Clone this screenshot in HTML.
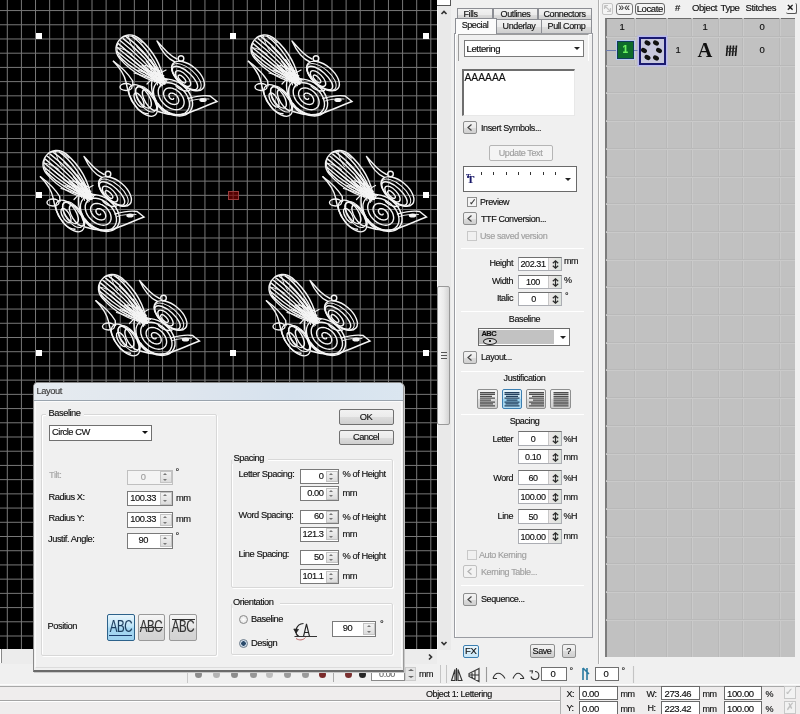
<!DOCTYPE html>
<html><head><meta charset="utf-8">
<style>
*{box-sizing:border-box}
html,body{margin:0;padding:0}
body{will-change:transform;width:800px;height:714px;overflow:hidden;position:relative;background:#f0f0f0;font-family:"Liberation Sans",sans-serif;font-size:9px;letter-spacing:-0.4px;color:#111;-webkit-text-stroke:0.15px currentColor}
.a{position:absolute}
.t{position:absolute;white-space:nowrap;line-height:10px}
.btn{position:absolute;border:1px solid #8e8f8f;border-radius:2px;background:linear-gradient(#f2f2f2,#ebebeb 50%,#dddddd 51%,#cfcfcf);}
.edit{position:absolute;background:#fff;border:1px solid #abadb3;border-top-color:#707070}
.spin{position:absolute;width:13px;right:0;top:0;bottom:0;background:linear-gradient(90deg,#ece8e8,#dde3dd);border-left:1px solid #c8c8c8}
.chev{position:absolute;left:3px;top:2px;width:8px;height:9px;font-size:9px;line-height:9px;color:#444}
.sep{position:absolute;height:1px;background:#a0a0a0;border-bottom:1px solid #fff}
.dis{color:#a0a0a0}
.tab{border:1px solid #8c8e94;border-bottom:none;background:linear-gradient(#f2f2f2,#ebebeb 50%,#dddddd 51%,#cfcfcf)}
</style></head><body>
<svg class="a" style="left:0;top:0" width="437" height="650" viewBox="0 0 437 650">
<defs><g id="bird" fill="none" stroke="#f4f4f4" stroke-width="1.4" stroke-linecap="round">
  <g transform="translate(129.5,48.5) rotate(45) scale(0.95,1)">
    <path d="M52,0 C35,-12 15,-15 0,-14 C-10,-13 -14,-6 -14,0 C-14,6 -10,13 0,14 C15,15 35,12 52,0Z"/>
    <path d="M52,0 C30,-10 8,-13 -7,-10.5"/>
    <path d="M52,0 C30,-7 8,-9 -11,-6"/>
    <path d="M52,0 C30,-4 6,-5 -12,-2.5"/>
    <path d="M52,0 C30,-1 6,-1 -12.5,1"/>
    <path d="M52,0 C30,2 6,3 -12,4.5"/>
    <path d="M52,0 C30,5 8,6 -10,8"/>
    <path d="M52,0 C30,8 8,10 -7,11"/>
    <path d="M52,0 C32,10 14,13 -2,13"/>
    <path d="M-13,-4 C-9,-12 -2,-13 5,-13 M-13,4 C-10,11 -3,13 4,13" stroke-width="1"/>
    <path d="M52,3 C42,4 32,5 24,7 M52,-3 C42,-4 32,-5 24,-7 M52,1 C40,1 30,2 22,3 M52,-1 C40,-1 30,-2 22,-3" stroke-width="1.4"/>
    <path d="M30,-6 L48,6 M34,-6 L50,4 M28,4 L46,-5 M32,6 L50,-3 M38,-5 L52,5 M26,-3 L44,6 M24,1 L40,-6" stroke-width="1.1"/>
  </g>
  <path d="M134,73 C145,76 155,80 165,84 M138,70 C148,74 157,78 166,82 M142,68 C151,72 159,76 168,80 M147,84 C152,78 158,74 166,70" stroke-width="1.2"/>
  <path d="M157,41 C162,52 168,59 175,62 M157,41 C165,50 170,56 177,59"/>
  <circle cx="181" cy="58.5" r="2.8"/>
  <ellipse cx="188" cy="76" rx="19.5" ry="10.5" transform="rotate(40 188 76)"/>
  <ellipse cx="185" cy="78" rx="16" ry="6.5" transform="rotate(42 185 78)"/>
  <ellipse cx="183" cy="78.5" rx="10" ry="4.5" transform="rotate(46 183 78.5)"/>
  <ellipse cx="182" cy="79" rx="5" ry="2" transform="rotate(46 182 79)"/>
  <path d="M189.5,90.5 C184,92 180,90 176,86"/>
  
  
  
  
  
  <path d="M173.6,98.5 L173.6,98.6 L173.5,98.7 L173.5,98.9 L173.4,99.0 L173.3,99.1 L173.2,99.2 L173.0,99.3 L172.9,99.4 L172.7,99.4 L172.5,99.4 L172.2,99.4 L172.0,99.4 L171.7,99.3 L171.5,99.2 L171.2,99.0 L170.9,98.9 L170.6,98.7 L170.4,98.5 L170.1,98.2 L169.9,97.9 L169.6,97.6 L169.4,97.3 L169.3,97.0 L169.1,96.6 L169.0,96.3 L168.9,95.9 L168.9,95.6 L168.9,95.2 L169.0,94.9 L169.1,94.6 L169.2,94.3 L169.4,94.0 L169.7,93.7 L170.0,93.5 L170.3,93.3 L170.6,93.2 L171.0,93.1 L171.5,93.1 L171.9,93.1 L172.4,93.2 L172.9,93.3 L173.5,93.4 L174.0,93.7 L174.5,93.9 L175.0,94.3 L175.6,94.6 L176.1,95.0 L176.5,95.5 L177.0,96.0 L177.4,96.5 L177.7,97.1 L178.0,97.7 L178.3,98.3 L178.5,98.9 L178.6,99.5 L178.7,100.1 L178.7,100.7 L178.7,101.2 L178.5,101.8 L178.3,102.3 L178.0,102.8 L177.7,103.2 L177.3,103.6 L176.8,103.9 L176.3,104.2 L175.7,104.3 L175.0,104.4 L174.3,104.5 L173.6,104.4 L172.8,104.3 L172.1,104.1 L171.3,103.9 L170.5,103.5 L169.7,103.1 L168.9,102.6 L168.1,102.0 L167.4,101.4 L166.7,100.7 L166.1,100.0 L165.5,99.2 L165.0,98.4 L164.5,97.5 L164.2,96.7 L163.9,95.8 L163.7,94.9 L163.6,94.1 L163.6,93.2 L163.7,92.4 L163.9,91.6 L164.2,90.9 L164.6,90.3 L165.1,89.7 L165.6,89.2 L166.3,88.7 L167.1,88.4 L167.9,88.1 L168.8,88.0 L169.7,87.9 L170.7,88.0 L171.7,88.1 L172.8,88.4 L173.8,88.8 L174.9,89.2 L176.0,89.8 L177.0,90.5 L178.0,91.2 L179.0,92.1 L179.9,93.0 L180.8,93.9 L181.5,95.0 L182.2,96.0 L182.8,97.1 L183.3,98.3 L183.7,99.4 L183.9,100.5 L184.1,101.6 L184.1,102.7 L184.0,103.8 L183.7,104.8 L183.4,105.7 L182.9,106.6 L182.3,107.3 L181.5,108.0 L180.7,108.6 L179.8,109.0 L178.7,109.4 L177.6,109.6 L176.4,109.7 L175.2,109.6 L173.9,109.4 L172.6,109.1 L171.2,108.7 L169.9,108.1 L168.5,107.4 L167.2,106.6 L165.9,105.7 L164.7,104.6 L163.6,103.5 L162.5,102.3 L161.5,101.1 L160.6,99.7 L159.9,98.4 L159.3,97.0 L158.8,95.6 L158.4,94.2 L158.3,92.8 L158.2,91.5 L158.3,90.2 L158.6,88.9 L159.0,87.8 L159.6,86.7 L160.3,85.7 L161.2,84.9 L162.2,84.2 L163.3,83.6 L164.5,83.2 L165.9,82.9 L167.3,82.8 L168.8,82.8 L170.3,83.0 L171.9,83.3 L173.6,83.8 L175.2,84.5 L176.8,85.3 L178.4,86.3 L179.9,87.3 L181.4,88.6 L182.8,89.9 L184.1,91.3 L185.3,92.8 L186.4,94.3 L187.3,96.0 L188.1,97.6 L188.7,99.3 L189.1,101.0 L189.4,102.6 L189.5,104.2 L189.4,105.8 L189.1,107.2 L188.7,108.6 L188.0,109.9 L187.2,111.1 L186.2,112.1 L185.1,113.0 L183.8,113.7 L182.3,114.2 L180.8,114.6 L179.1,114.8 L177.4,114.8 L175.6,114.6 L173.7,114.3 L171.8,113.7 L169.9,113.0 L168.0,112.1 L166.2,111.0 L164.3,109.8 L162.6,108.4 L160.9,106.9 L159.4,105.3 L158.0,103.5"/>
  <ellipse cx="173" cy="97.5" rx="22" ry="15.5" transform="rotate(40 173 97.5)"/>
  <path d="M188,98.5 C195,96.5 204,95 210,96 L217,101.5 C205,106 195,111 185,114 C177,115.5 168,115 158,111.5"/>
  <path d="M190,101 C196,99 203,98.5 209,99" stroke-width="0.9"/>
  <ellipse cx="203" cy="100" rx="3" ry="1.4" fill="#f4f4f4"/>
  <path d="M113.4,61.3 C120,66 127,72 132.7,81 L133,86"/>
  <path d="M113.4,61.3 C118,66 124,73 126,82 C128,92 130,100 137.7,108.7 C141,112 145,113.5 148,113.8"/>
  <ellipse cx="126" cy="87" rx="6" ry="3.5"/>
  <ellipse cx="143" cy="100.5" rx="19" ry="9.5" transform="rotate(50 143 100.5)"/>
  <ellipse cx="143.5" cy="97.5" rx="12" ry="5.5" transform="rotate(58 143.5 97.5)"/>
  <ellipse cx="150" cy="100" rx="12" ry="5" transform="rotate(58 150 100)"/>
  <ellipse cx="139" cy="100" rx="8" ry="3.5" transform="rotate(60 139 100)"/>
  <path d="M152,80 C150,92 155,106 166,113"/>

  <g transform="translate(129.5,48.5) rotate(45) scale(0.95,1)" stroke-width="1">
    <path d="M52,0 C34,-5.5 16,-7 4,-6.5"/>
    <path d="M52,0 C34,4.5 16,6 4,6.5"/>
    <path d="M-10,-8 C-5,-5 0,-3 6,-2 M-10,8 C-5,5 0,3 6,2" stroke-width="0.9"/>
  </g>
  
  <ellipse cx="186.5" cy="77" rx="18" ry="8.5" transform="rotate(41 186.5 77)" stroke-width="1"/>
  <ellipse cx="146" cy="99" rx="15" ry="7.5" transform="rotate(55 146 99)" stroke-width="1"/>
</g>
</defs>
<rect x="0" y="0" width="437" height="649.5" fill="#000"/>
<path d="M7.30 0V649.5M21.42 0V649.5M35.53 0V649.5M49.65 0V649.5M63.77 0V649.5M77.89 0V649.5M92.00 0V649.5M106.12 0V649.5M120.24 0V649.5M134.35 0V649.5M148.47 0V649.5M162.59 0V649.5M176.70 0V649.5M190.82 0V649.5M204.94 0V649.5M219.06 0V649.5M233.17 0V649.5M247.29 0V649.5M261.41 0V649.5M275.52 0V649.5M289.64 0V649.5M303.76 0V649.5M317.87 0V649.5M331.99 0V649.5M346.11 0V649.5M360.23 0V649.5M374.34 0V649.5M388.46 0V649.5M402.58 0V649.5M416.69 0V649.5M430.81 0V649.5M0 10.55H437M0 24.77H437M0 38.98H437M0 53.19H437M0 67.41H437M0 81.62H437M0 95.84H437M0 110.05H437M0 124.27H437M0 138.49H437M0 152.70H437M0 166.92H437M0 181.13H437M0 195.34H437M0 209.56H437M0 223.78H437M0 237.99H437M0 252.21H437M0 266.42H437M0 280.63H437M0 294.85H437M0 309.06H437M0 323.28H437M0 337.50H437M0 351.71H437M0 365.93H437M0 380.14H437M0 394.36H437M0 408.57H437M0 422.79H437M0 437.00H437M0 451.22H437M0 465.43H437M0 479.64H437M0 493.86H437M0 508.07H437M0 522.29H437M0 536.50H437M0 550.72H437M0 564.93H437M0 579.15H437M0 593.36H437M0 607.58H437M0 621.79H437M0 636.01H437" stroke="#787878" stroke-width="1" fill="none"/>
<use href="#bird"/>
<use href="#bird" transform="translate(135,0)"/>
<use href="#bird" transform="translate(-73,115.5)"/>
<use href="#bird" transform="translate(209.5,115.5)"/>
<use href="#bird" transform="translate(-17.5,239.5)"/>
<use href="#bird" transform="translate(153,239.5)"/>
<g fill="#fff">
<rect x="36" y="33" width="6" height="6"/><rect x="230" y="33" width="6" height="6"/><rect x="423" y="33" width="6" height="6"/>
<rect x="36" y="192" width="6" height="6"/><rect x="423" y="192" width="6" height="6"/>
<rect x="36" y="350" width="6" height="6"/><rect x="230" y="350" width="6" height="6"/><rect x="423" y="350" width="6" height="6"/>
</g>
<rect x="228.5" y="191.5" width="10" height="8" fill="#800000" fill-opacity="0.65" stroke="#9a3c3c" stroke-width="1"/>
</svg>
<!-- vertical scrollbar -->
<div class="a" style="left:437px;top:0;width:14px;height:650px;background:#e9e9e9;border-left:1px solid #f6f6f6"></div>
<div class="a" style="left:437px;top:0;width:14px;height:6px;background:#fff;border:1px solid #555;border-top:none;border-left:none"></div>
<svg class="a" style="left:439px;top:9px" width="10" height="7"><path d="M2.5 5L5 2.5L7.5 5" fill="none" stroke="#333" stroke-width="1.7"/></svg>
<div class="a" style="left:437px;top:286px;width:13px;height:139px;border:1px solid #999;border-radius:2px;background:linear-gradient(90deg,#f6f6f6,#ececec 50%,#d4d4d4)"></div>
<div class="a" style="left:441px;top:352px;width:6px;height:7px;border-top:1px solid #555;border-bottom:1px solid #555"><div style="margin-top:2px;height:1px;background:#555"></div></div>
<svg class="a" style="left:439px;top:640px" width="10" height="7"><path d="M2.5 2L5 4.5L7.5 2" fill="none" stroke="#333" stroke-width="1.7"/></svg>
<!-- horizontal scrollbar -->
<div class="a" style="left:0;top:649px;width:437px;height:15px;background:#ececec"></div>
<div class="a" style="left:0;top:649px;width:2px;height:14px;background:#fff;border-right:1px solid #888"></div>
<svg class="a" style="left:427px;top:651.5px" width="7" height="10"><path d="M2 2.5L4.5 5L2 7.5" fill="none" stroke="#333" stroke-width="1.7"/></svg>
<!-- docker panel -->
<div class="a" style="left:451px;top:0;width:147px;height:664px;background:#f0f0f0"></div>
<!-- tabs row1 -->
<div class="a tab" style="left:456.5px;top:7.5px;width:36px;height:12px"></div>
<div class="a tab" style="left:493px;top:7.5px;width:45px;height:12px"></div>
<div class="a tab" style="left:537.5px;top:7.5px;width:54.5px;height:12px"></div>
<div class="t" style="left:470.5px;top:8.5px;transform:translateX(-50%)">Fills</div>
<div class="t" style="left:515.5px;top:8.5px;transform:translateX(-50%)">Outlines</div>
<div class="t" style="left:564.5px;top:8.5px;transform:translateX(-50%)">Connectors</div>
<!-- tabs row2 -->
<div class="a tab" style="left:496px;top:19px;width:45.5px;height:14px"></div>
<div class="a tab" style="left:541px;top:19px;width:51px;height:14px"></div>
<div class="t" style="left:519px;top:21px;transform:translateX(-50%)">Underlay</div>
<div class="t" style="left:566.5px;top:21px;transform:translateX(-50%)">Pull Comp</div>
<!-- tab content -->
<div class="a" style="left:454px;top:32.5px;width:139px;height:605px;border:1px solid #9a9ca2;box-shadow:inset 1px 1px 0 #fff;background:#f0f0f0"></div>
<div class="a" style="left:454.5px;top:17.5px;width:42px;height:16px;border:1px solid #8c8e94;border-bottom:none;background:#fbfbfb"></div>
<div class="t" style="left:475px;top:19.5px;transform:translateX(-50%)">Special</div>
<!-- inner group -->
<div class="a" style="left:458px;top:34px;width:131px;height:27px;border-top:1px solid #9c9c9c;border-left:1px solid #9c9c9c;border-right:1px solid #fff"></div>
<div class="edit" style="left:463.5px;top:40px;width:120.5px;height:16.5px;border-color:#7a7a7a"></div>
<div class="t" style="left:466.5px;top:43.5px;font-size:9.6px">Lettering</div>
<div class="a" style="left:573.5px;top:46.5px;border-left:3.5px solid transparent;border-right:3.5px solid transparent;border-top:3.5px solid #222"></div>
<!-- text area -->
<div class="edit" style="left:462px;top:68.5px;width:113px;height:47px;border-color:#e8e8e8;border-top:2px solid #6e6e6e;border-left:2px solid #6e6e6e"></div>
<div class="t" style="left:464.5px;top:72.5px;font-size:10.3px;letter-spacing:0">AAAAAA</div>
<!-- insert symbols -->
<div class="btn sm" style="left:463px;top:121px;width:14px;height:13px"></div><svg class="a" style="left:463px;top:121.0px" width="14" height="13"><path d="M8.5 3.5L5 6.5L8.5 9.5" fill="none" stroke="#444" stroke-width="1.2"/></svg>
<div class="t" style="left:481px;top:122.5px">Insert Symbols...</div>
<div class="btn" style="left:488.5px;top:144.5px;width:64px;height:16px;border-color:#b5b5b5;background:#f4f4f4"></div>
<div class="t dis" style="left:520.5px;top:147.5px;transform:translateX(-50%)">Update Text</div>
<!-- ruler dropdown -->
<div class="edit" style="left:462.5px;top:166px;width:114px;height:26px;border-color:#6a6a6a"></div>
<div class="t" style="left:467px;top:174px;font-family:'Liberation Serif';font-weight:bold;font-size:11px;color:#1a1a6a">T</div>
<div class="t" style="left:466px;top:171px;font-family:'Liberation Serif';font-weight:bold;font-size:7px;color:#1a1a6a">T</div>
<div class="a" style="left:481px;top:172px;width:76px;height:3px;background:repeating-linear-gradient(90deg,#333 0 1px,transparent 1px 12.33px)"></div>
<div class="a" style="left:564.5px;top:177.5px;border-left:3.5px solid transparent;border-right:3.5px solid transparent;border-top:3.5px solid #222"></div>
<!-- preview -->
<div class="a chk" style="left:467px;top:197px;width:10px;height:10px;border:1px solid #8f8f8f;background:#f4f4f4"></div>
<div class="t" style="left:468.5px;top:196.5px;font-size:9px;color:#333">&#10003;</div>
<div class="t" style="left:480px;top:196.5px">Preview</div>
<div class="btn sm" style="left:463px;top:212px;width:14px;height:13px"></div><svg class="a" style="left:463px;top:212.0px" width="14" height="13"><path d="M8.5 3.5L5 6.5L8.5 9.5" fill="none" stroke="#444" stroke-width="1.2"/></svg>
<div class="t" style="left:481px;top:213.5px">TTF Conversion...</div>
<div class="a" style="left:467px;top:231px;width:10px;height:10px;border:1px solid #c8c8c8"></div>
<div class="t dis" style="left:480px;top:231px">Use saved version</div>
<div class="sep" style="left:461px;top:248px;width:123px"></div>
<!-- height width italic -->
<div class="t" style="left:513px;top:257.5px;transform:translateX(-100%)">Height</div>
<div class="edit sp" style="left:517.5px;top:256.5px;width:44px;height:14.5px"><div class="spin"><svg style="position:absolute;left:3px;top:2.5px" width="7" height="9"><path d="M0.8 3.2L3.5 0.8L6.2 3.2M0.8 5.8L3.5 8.2L6.2 5.8M3.5 1V8" fill="none" stroke="#2a2a2a" stroke-width="1.2"/></svg></div></div>
<div class="t" style="left:533px;top:258.5px;transform:translateX(-50%)">202.31</div>
<div class="t" style="left:564px;top:256px">mm</div>
<div class="t" style="left:513px;top:276px;transform:translateX(-100%)">Width</div>
<div class="edit sp" style="left:517.5px;top:274.5px;width:44px;height:14.5px"><div class="spin"><svg style="position:absolute;left:3px;top:2.5px" width="7" height="9"><path d="M0.8 3.2L3.5 0.8L6.2 3.2M0.8 5.8L3.5 8.2L6.2 5.8M3.5 1V8" fill="none" stroke="#2a2a2a" stroke-width="1.2"/></svg></div></div>
<div class="t" style="left:533px;top:276.5px;transform:translateX(-50%)">100</div>
<div class="t" style="left:564px;top:274.5px">%</div>
<div class="t" style="left:513px;top:293px;transform:translateX(-100%)">Italic</div>
<div class="edit sp" style="left:517.5px;top:291.5px;width:44px;height:14.5px"><div class="spin"><svg style="position:absolute;left:3px;top:2.5px" width="7" height="9"><path d="M0.8 3.2L3.5 0.8L6.2 3.2M0.8 5.8L3.5 8.2L6.2 5.8M3.5 1V8" fill="none" stroke="#2a2a2a" stroke-width="1.2"/></svg></div></div>
<div class="t" style="left:533.5px;top:293.5px;transform:translateX(-50%)">0</div>
<div class="t" style="left:565px;top:291px">&deg;</div>
<div class="sep" style="left:461px;top:310.5px;width:123px"></div>
<div class="t" style="left:524.5px;top:313.5px;transform:translateX(-50%)">Baseline</div>
<div class="edit" style="left:477.5px;top:328px;width:92px;height:18px;border-color:#6a6a6a"></div>
<div class="a" style="left:479px;top:329.5px;width:75px;height:14.5px;background:#c2c2c2"></div>
<div class="t" style="left:481.5px;top:328.5px;font-size:7.5px;font-weight:bold;letter-spacing:-0.6px">ABC</div>
<div class="a" style="left:483px;top:337.5px;width:14px;height:7px;border:1.2px solid #222;border-radius:50%;background:#d8d8d8"></div><div class="a" style="left:489px;top:340px;width:2px;height:2px;background:#222"></div>
<div class="a" style="left:559.5px;top:335.5px;border-left:3.5px solid transparent;border-right:3.5px solid transparent;border-top:3.5px solid #222"></div>
<div class="btn sm" style="left:463px;top:350.5px;width:14px;height:13.5px"></div><svg class="a" style="left:463px;top:350.5px" width="14" height="13"><path d="M8.5 3.5L5 6.5L8.5 9.5" fill="none" stroke="#444" stroke-width="1.2"/></svg>
<div class="t" style="left:481px;top:352px">Layout...</div>
<div class="sep" style="left:461px;top:370.5px;width:123px"></div>
<div class="t" style="left:524.5px;top:373px;transform:translateX(-50%)">Justification</div>
<div class="btn jb" style="left:477px;top:388.5px;width:21px;height:20.5px"></div>
<div class="btn jb" style="left:501.5px;top:388.5px;width:20.5px;height:20.5px;border-color:#3c7fb1;background:linear-gradient(#e5f4fc,#c4e5f6 50%,#98d1ef 51%,#b3dcf2)"></div>
<div class="btn jb" style="left:526px;top:388.5px;width:20px;height:20.5px"></div>
<div class="btn jb" style="left:550px;top:388.5px;width:21px;height:20.5px"></div>
<svg class="a" style="left:0;top:0" width="600" height="420"><path d="M480.0 392.50H495.0M480.0 394.40H495.0M480.0 396.30H492.0M480.0 398.20H495.0M480.0 400.10H491.0M480.0 402.00H495.0M480.0 403.90H493.0M480.0 405.80H495.0M529.0 392.50H544.0M529.0 394.40H544.0M532.0 396.30H544.0M529.0 398.20H544.0M533.0 400.10H544.0M529.0 402.00H544.0M531.0 403.90H544.0M529.0 405.80H544.0M553.5 392.50H568.5M553.5 394.40H568.5M553.5 396.30H568.5M553.5 398.20H568.5M553.5 400.10H568.5M553.5 402.00H568.5M553.5 403.90H568.5M553.5 405.80H568.5" stroke="#4e4e4e" stroke-width="1.25" fill="none"/><path d="M504.5 392.50H519.5M504.5 394.40H519.5M506.0 396.30H518.0M504.5 398.20H519.5M506.5 400.10H517.5M504.5 402.00H519.5M505.5 403.90H518.5M504.5 405.80H519.5" stroke="#22405e" stroke-width="1.25" fill="none"/></svg>
<div class="sep" style="left:461px;top:413.5px;width:123px"></div>
<div class="t" style="left:524.5px;top:415.5px;transform:translateX(-50%)">Spacing</div>
<div class="t" style="left:513px;top:433.5px;transform:translateX(-100%)">Letter</div>
<div class="edit sp" style="left:517.5px;top:431px;width:44px;height:15px"><div class="spin"><svg style="position:absolute;left:3px;top:2.5px" width="7" height="9"><path d="M0.8 3.2L3.5 0.8L6.2 3.2M0.8 5.8L3.5 8.2L6.2 5.8M3.5 1V8" fill="none" stroke="#2a2a2a" stroke-width="1.2"/></svg></div></div>
<div class="t" style="left:533px;top:434px;transform:translateX(-50%)">0</div>
<div class="t" style="left:563.5px;top:433.5px">%H</div>
<div class="edit sp" style="left:517.5px;top:449px;width:44px;height:15px"><div class="spin"><svg style="position:absolute;left:3px;top:2.5px" width="7" height="9"><path d="M0.8 3.2L3.5 0.8L6.2 3.2M0.8 5.8L3.5 8.2L6.2 5.8M3.5 1V8" fill="none" stroke="#2a2a2a" stroke-width="1.2"/></svg></div></div>
<div class="t" style="left:533px;top:452px;transform:translateX(-50%)">0.10</div>
<div class="t" style="left:563.5px;top:451.5px">mm</div>
<div class="t" style="left:513px;top:472.5px;transform:translateX(-100%)">Word</div>
<div class="edit sp" style="left:517.5px;top:470px;width:44px;height:15px"><div class="spin"><svg style="position:absolute;left:3px;top:2.5px" width="7" height="9"><path d="M0.8 3.2L3.5 0.8L6.2 3.2M0.8 5.8L3.5 8.2L6.2 5.8M3.5 1V8" fill="none" stroke="#2a2a2a" stroke-width="1.2"/></svg></div></div>
<div class="t" style="left:533px;top:473px;transform:translateX(-50%)">60</div>
<div class="t" style="left:563.5px;top:472.5px">%H</div>
<div class="edit sp" style="left:517.5px;top:489px;width:44px;height:15px"><div class="spin"><svg style="position:absolute;left:3px;top:2.5px" width="7" height="9"><path d="M0.8 3.2L3.5 0.8L6.2 3.2M0.8 5.8L3.5 8.2L6.2 5.8M3.5 1V8" fill="none" stroke="#2a2a2a" stroke-width="1.2"/></svg></div></div>
<div class="t" style="left:533px;top:492px;transform:translateX(-50%)">100.00</div>
<div class="t" style="left:563.5px;top:491.5px">mm</div>
<div class="t" style="left:513px;top:511.0px;transform:translateX(-100%)">Line</div>
<div class="edit sp" style="left:517.5px;top:508.5px;width:44px;height:15px"><div class="spin"><svg style="position:absolute;left:3px;top:2.5px" width="7" height="9"><path d="M0.8 3.2L3.5 0.8L6.2 3.2M0.8 5.8L3.5 8.2L6.2 5.8M3.5 1V8" fill="none" stroke="#2a2a2a" stroke-width="1.2"/></svg></div></div>
<div class="t" style="left:533px;top:511.5px;transform:translateX(-50%)">50</div>
<div class="t" style="left:563.5px;top:511.0px">%H</div>
<div class="edit sp" style="left:517.5px;top:528.5px;width:44px;height:15px"><div class="spin"><svg style="position:absolute;left:3px;top:2.5px" width="7" height="9"><path d="M0.8 3.2L3.5 0.8L6.2 3.2M0.8 5.8L3.5 8.2L6.2 5.8M3.5 1V8" fill="none" stroke="#2a2a2a" stroke-width="1.2"/></svg></div></div>
<div class="t" style="left:533px;top:531.5px;transform:translateX(-50%)">100.00</div>
<div class="t" style="left:563.5px;top:531.0px">mm</div>
<div class="a" style="left:466.5px;top:549.5px;width:10px;height:10px;border:1px solid #c8c8c8"></div>
<div class="t dis" style="left:479px;top:549.5px">Auto Kerning</div>
<div class="btn sm" style="left:463px;top:565px;width:14px;height:13px;border-color:#c0c0c0;background:#f2f2f2"></div><svg class="a" style="left:463px;top:565.0px" width="14" height="13"><path d="M8.5 3.5L5 6.5L8.5 9.5" fill="none" stroke="#b0b0b0" stroke-width="1.2"/></svg>
<div class="t dis" style="left:481px;top:566.5px">Kerning Table...</div>
<div class="sep" style="left:461px;top:584.5px;width:123px"></div>
<div class="btn sm" style="left:463px;top:592.5px;width:14px;height:13px"></div><svg class="a" style="left:463px;top:592.5px" width="14" height="13"><path d="M8.5 3.5L5 6.5L8.5 9.5" fill="none" stroke="#444" stroke-width="1.2"/></svg>
<div class="t" style="left:481px;top:594px">Sequence...</div>
<div class="btn" style="left:463px;top:644.5px;width:15.5px;height:13.5px;border-color:#3c7fb1;background:linear-gradient(#eaf6fd,#c8e6f6)"></div>
<div class="t" style="left:465px;top:646px;font-size:9.5px">FX</div>
<div class="btn" style="left:529.5px;top:644px;width:25.5px;height:14px"></div>
<div class="t" style="left:542px;top:646px;transform:translateX(-50%)">Save</div>
<div class="btn" style="left:561.5px;top:644px;width:14.5px;height:14px"></div>
<div class="t" style="left:568.5px;top:646px;transform:translateX(-50%)">?</div>
<div class="a" style="left:598px;top:0;width:1px;height:664px;background:#b0b0b0"></div>
<!-- object list -->
<div class="a" style="left:599px;top:0;width:201px;height:664px;background:#f0f0f0;border-left:1px solid #fafafa"></div>
<div class="btn" style="left:602px;top:2.5px;width:11px;height:12px;border-color:#c4c4c4;background:#f4f4f4"></div>
<svg class="a" style="left:603px;top:4px" width="9" height="9"><path d="M1.5 1.5H5M1.5 1.5V5M2 2L7.5 7.5M7.5 4V7.5H4" fill="none" stroke="#c4c4c4" stroke-width="1.2"/></svg>
<div class="btn" style="left:615.5px;top:2.5px;width:17.5px;height:12px;background:#f5f5f5;border-color:#777;border-radius:3px"></div>
<div class="t" style="left:624.3px;top:3px;font-size:10px;letter-spacing:0.3px;transform:translateX(-50%);color:#333">&raquo;&laquo;</div>
<div class="btn" style="left:634.5px;top:2.5px;width:30.5px;height:12px;background:#f5f5f5;border-color:#666;border-radius:3px"></div>
<div class="t" style="left:649.8px;top:3.5px;transform:translateX(-50%);font-size:9.5px">Locate</div>
<div class="t" style="left:675px;top:3px;font-size:9.5px">#</div>
<div class="t" style="left:692px;top:3px;font-size:9.5px">Object</div>
<div class="t" style="left:720.5px;top:3px;font-size:9.5px">Type</div>
<div class="t" style="left:745.5px;top:3px;font-size:9.5px">Stitches</div>
<div class="btn" style="left:786px;top:3px;width:11px;height:11px;border:none;border-right:1px solid #555;border-bottom:1px solid #555;background:#f4f4f4"></div>
<div class="t" style="left:787px;top:2px;font-size:11px;font-weight:bold">&times;</div>
<div class="a" style="left:605px;top:18px;width:190px;height:639px;background:#c1c1c1;border-left:2px solid #7c7c7c;border-top:1px solid #6c6c6c;overflow:hidden"></div>
<div class="a" style="left:634.1px;top:18px;width:2px;height:639px;border-left:1px solid #b9b9b9;border-right:1px solid #cacaca"></div>
<div class="a" style="left:665.5px;top:18px;width:2px;height:639px;border-left:1px solid #b9b9b9;border-right:1px solid #cacaca"></div>
<div class="a" style="left:690.5px;top:18px;width:2px;height:639px;border-left:1px solid #b9b9b9;border-right:1px solid #cacaca"></div>
<div class="a" style="left:718.1px;top:18px;width:2px;height:639px;border-left:1px solid #b9b9b9;border-right:1px solid #cacaca"></div>
<div class="a" style="left:741.5px;top:18px;width:2px;height:639px;border-left:1px solid #b9b9b9;border-right:1px solid #cacaca"></div>
<div class="a" style="left:778.5px;top:18px;width:2px;height:639px;border-left:1px solid #b9b9b9;border-right:1px solid #cacaca"></div>
<div class="a" style="left:606px;top:36.0px;width:189px;height:2px;border-top:1px solid #b9b9b9;border-bottom:1px solid #cacaca"></div>
<div class="a" style="left:606px;top:64.7px;width:189px;height:2px;border-top:1px solid #b9b9b9;border-bottom:1px solid #cacaca"></div>
<div class="a" style="left:606px;top:92.4px;width:189px;height:2px;border-top:1px solid #b9b9b9;border-bottom:1px solid #cacaca"></div>
<div class="a" style="left:606px;top:120.1px;width:189px;height:2px;border-top:1px solid #b9b9b9;border-bottom:1px solid #cacaca"></div>
<div class="a" style="left:606px;top:147.8px;width:189px;height:2px;border-top:1px solid #b9b9b9;border-bottom:1px solid #cacaca"></div>
<div class="a" style="left:606px;top:175.5px;width:189px;height:2px;border-top:1px solid #b9b9b9;border-bottom:1px solid #cacaca"></div>
<div class="a" style="left:606px;top:203.2px;width:189px;height:2px;border-top:1px solid #b9b9b9;border-bottom:1px solid #cacaca"></div>
<div class="a" style="left:606px;top:230.9px;width:189px;height:2px;border-top:1px solid #b9b9b9;border-bottom:1px solid #cacaca"></div>
<div class="a" style="left:606px;top:258.6px;width:189px;height:2px;border-top:1px solid #b9b9b9;border-bottom:1px solid #cacaca"></div>
<div class="a" style="left:606px;top:286.3px;width:189px;height:2px;border-top:1px solid #b9b9b9;border-bottom:1px solid #cacaca"></div>
<div class="a" style="left:606px;top:314.0px;width:189px;height:2px;border-top:1px solid #b9b9b9;border-bottom:1px solid #cacaca"></div>
<div class="a" style="left:606px;top:341.7px;width:189px;height:2px;border-top:1px solid #b9b9b9;border-bottom:1px solid #cacaca"></div>
<div class="a" style="left:606px;top:369.4px;width:189px;height:2px;border-top:1px solid #b9b9b9;border-bottom:1px solid #cacaca"></div>
<div class="a" style="left:606px;top:397.1px;width:189px;height:2px;border-top:1px solid #b9b9b9;border-bottom:1px solid #cacaca"></div>
<div class="a" style="left:606px;top:424.8px;width:189px;height:2px;border-top:1px solid #b9b9b9;border-bottom:1px solid #cacaca"></div>
<div class="a" style="left:606px;top:452.5px;width:189px;height:2px;border-top:1px solid #b9b9b9;border-bottom:1px solid #cacaca"></div>
<div class="a" style="left:606px;top:480.2px;width:189px;height:2px;border-top:1px solid #b9b9b9;border-bottom:1px solid #cacaca"></div>
<div class="a" style="left:606px;top:507.9px;width:189px;height:2px;border-top:1px solid #b9b9b9;border-bottom:1px solid #cacaca"></div>
<div class="a" style="left:606px;top:535.6px;width:189px;height:2px;border-top:1px solid #b9b9b9;border-bottom:1px solid #cacaca"></div>
<div class="a" style="left:606px;top:563.3px;width:189px;height:2px;border-top:1px solid #b9b9b9;border-bottom:1px solid #cacaca"></div>
<div class="a" style="left:606px;top:591.0px;width:189px;height:2px;border-top:1px solid #b9b9b9;border-bottom:1px solid #cacaca"></div>
<div class="a" style="left:606px;top:618.7px;width:189px;height:2px;border-top:1px solid #b9b9b9;border-bottom:1px solid #cacaca"></div>
<div class="t" style="left:619.5px;top:22px;font-size:9.5px">1</div>
<div class="t" style="left:702.5px;top:22px;font-size:9.5px">1</div>
<div class="t" style="left:759.5px;top:22px;font-size:9.5px">0</div>
<div class="a" style="left:606px;top:49.5px;width:12px;height:1px;background:#6c7cb0"></div>
<div class="a" style="left:617px;top:41px;width:17px;height:17.5px;background:#0e6b2a;border:1.5px solid #123a5a;box-shadow:0 0 0 1px #b8c8f0"></div>
<div class="t" style="left:622.5px;top:44.5px;font-size:10px;font-weight:bold;color:#6cf060">1</div>
<div class="a" style="left:634px;top:49.5px;width:5px;height:1px;background:#6c7cb0"></div>
<div class="a" style="left:638.5px;top:37px;width:27.5px;height:27.5px;background:#c8c8de;border:2px solid #1a1a70;box-shadow:0 0 0 1.5px #b8b8f0"></div>
<svg class="a" style="left:640px;top:39px" width="25" height="24" viewBox="0 0 25 24"><g fill="#111">
<ellipse cx="7.5" cy="4" rx="3.2" ry="2.2" transform="rotate(30 7.5 4)"/><ellipse cx="16" cy="4" rx="3.2" ry="2.2" transform="rotate(30 16 4)"/>
<ellipse cx="4" cy="11.5" rx="3.2" ry="2.2" transform="rotate(30 4 11.5)"/><ellipse cx="19" cy="11.5" rx="3.2" ry="2.2" transform="rotate(30 19 11.5)"/>
<ellipse cx="7.5" cy="18.5" rx="3.2" ry="2.2" transform="rotate(30 7.5 18.5)"/><ellipse cx="16" cy="19" rx="3.2" ry="2.2" transform="rotate(30 16 19)"/></g></svg>
<div class="t" style="left:675.5px;top:45px;font-size:9.5px">1</div>
<div class="t" style="left:697.5px;top:40px;font-family:'Liberation Serif';font-weight:bold;font-size:20.5px;line-height:20px;letter-spacing:0;-webkit-text-stroke:0">A</div>
<svg class="a" style="left:725px;top:44px" width="14" height="13" viewBox="0 0 14 13"><path d="M2.5 1.5L1.5 12M5.5 1.5L4.5 12M8.5 1.5L7.5 12M11.5 1.5L10.5 12" stroke="#151515" stroke-width="1.6" fill="none"/><path d="M1 5L3 3.5L4 5L6 3.5L7 5L9 3.5L10 5L12 3.5M1 8.5L3 7L4 8.5L6 7L7 8.5L9 7L10 8.5L12 7" stroke="#333" stroke-width="0.9" fill="none"/></svg>
<div class="t" style="left:759.5px;top:45px;font-size:9.5px">0</div>
<!-- toolbar row -->
<div class="a" style="left:0;top:664px;width:800px;height:20px;background:#f0f0f0"></div>
<div class="a" style="left:0;top:683.5px;width:800px;height:1px;background:#fcfcfc"></div>
<div class="a" style="left:0;top:685.5px;width:800px;height:1px;background:#a8a8a8"></div>
<div class="a" style="left:187px;top:665px;width:1px;height:18px;background:#c8c8c8"></div>
<div class="a" style="left:195.1px;top:671px;width:7px;height:7px;border-radius:50%;background:#8c8c8c"></div>
<div class="a" style="left:213.3px;top:671px;width:7px;height:7px;border-radius:50%;background:#b4b4b4"></div>
<div class="a" style="left:230.5px;top:671px;width:7px;height:7px;border-radius:50%;background:#8c8c8c"></div>
<div class="a" style="left:249.5px;top:671px;width:7px;height:7px;border-radius:50%;background:#969696"></div>
<div class="a" style="left:265.5px;top:671px;width:7px;height:7px;border-radius:50%;background:#bdbdbd"></div>
<div class="a" style="left:284.0px;top:671px;width:7px;height:7px;border-radius:50%;background:#9a9a9a"></div>
<div class="a" style="left:301.5px;top:671px;width:7px;height:7px;border-radius:50%;background:#9a9a9a"></div>
<div class="a" style="left:318.5px;top:671px;width:7px;height:7px;border-radius:50%;background:#7a2a2a"></div>
<div class="a" style="left:344.5px;top:671px;width:7px;height:7px;border-radius:50%;background:#7a3030"></div>
<div class="a" style="left:358.5px;top:671px;width:7px;height:7px;border-radius:50%;background:#262626"></div>
<div class="a" style="left:332.5px;top:667px;width:1px;height:15px;background:#aaa"></div>
<div class="a" style="left:344px;top:669px;width:6px;height:2px;background:#223"></div>
<div class="edit" style="left:370.5px;top:667px;width:34px;height:14px;border-color:#8a8a8a"></div>
<div class="t" style="left:387px;top:668.5px;transform:translateX(-50%);color:#666">0.00</div>
<div class="a" style="left:405px;top:667px;width:11px;height:14px;background:#e4e4e4;border:1px solid #ccc"></div>
<div class="a" style="left:408px;top:669px;border-left:3px solid transparent;border-right:3px solid transparent;border-bottom:2.5px solid #666"></div>
<div class="a" style="left:408px;top:676px;border-left:3px solid transparent;border-right:3px solid transparent;border-top:2.5px solid #666"></div>
<div class="t" style="left:419px;top:669px">mm</div>
<div class="a" style="left:440px;top:665px;width:1px;height:18px;background:#c4c4c4"></div>
<div class="a" style="left:446px;top:665px;width:1px;height:18px;background:#c4c4c4"></div>
<svg class="a" style="left:450px;top:666px" width="190" height="17" viewBox="450 666 190 17" fill="none" stroke="#333" stroke-width="1.1">
<path d="M456.5 668V681M455 669.5L451.5 680.5H455ZM458 669.5L462 680.5H458Z"/>
<path d="M479 668.5L469 673.5V676.5L479 681.5ZM469 675H479M472 671.5V679M475 670.5V680"/>
<path d="M486.5 667V682" stroke="#999"/>
<path d="M493 678.5C495 671.5 501 671.5 505 678.5M493 678.5H497" />
<path d="M513 678.5C516 671.5 520 671.5 524 678.5M520 678.5H524"/>
<path d="M535 671.5A4 4 0 1 1 531 676.5M529.5 671L532.5 670.8L532 673.5"/>
<path d="M583 668V680M587 668V680M583 668L589 674" stroke="#2a7aa0" stroke-width="1.6"/>
<path d="M633.5 665V683" stroke="#c4c4c4"/>
</svg>
<div class="edit" style="left:540.5px;top:667px;width:26px;height:14px;border-color:#707070"></div>
<div class="t" style="left:553px;top:668.5px;transform:translateX(-50%);font-size:9.5px">0</div>
<div class="t" style="left:569.5px;top:666px">&deg;</div>
<div class="edit" style="left:594.5px;top:667px;width:24px;height:14px;border-color:#707070"></div>
<div class="t" style="left:606px;top:668.5px;transform:translateX(-50%);font-size:9.5px">0</div>
<div class="t" style="left:621.5px;top:666px">&deg;</div>
<!-- status bar -->
<div class="a" style="left:0;top:686.5px;width:800px;height:28px;background:#efeded"></div>
<div class="a" style="left:0;top:700px;width:560px;height:1px;background:#a4a4a4"></div>
<div class="a" style="left:0;top:701px;width:560px;height:1px;background:#fff"></div>
<div class="a" style="left:560px;top:686.5px;width:1px;height:28px;background:#b0b0b0"></div>
<div class="t" style="left:426px;top:689px">Object 1: Lettering</div>
<div class="t" style="left:566.5px;top:688.5px">X:</div>
<div class="t" style="left:566.5px;top:703px">Y:</div>
<div class="edit" style="left:578.5px;top:686px;width:39.5px;height:13.5px;border-color:#6a6a6a"></div>
<div class="edit" style="left:578.5px;top:701px;width:39.5px;height:13.5px;border-color:#6a6a6a"></div>
<div class="t" style="left:582px;top:688.5px;font-size:9.5px">0.00</div>
<div class="t" style="left:582px;top:703.5px;font-size:9.5px">0.00</div>
<div class="t" style="left:620.5px;top:689px">mm</div>
<div class="t" style="left:620.5px;top:704px">mm</div>
<div class="t" style="left:646.5px;top:688.5px">W:</div>
<div class="t" style="left:647.5px;top:703px">H:</div>
<div class="edit" style="left:660.5px;top:686px;width:39.5px;height:13.5px;border-color:#6a6a6a"></div>
<div class="edit" style="left:660.5px;top:701px;width:39.5px;height:13.5px;border-color:#6a6a6a"></div>
<div class="t" style="left:664.5px;top:688.5px;font-size:9.5px">273.46</div>
<div class="t" style="left:664.5px;top:703.5px;font-size:9.5px">223.42</div>
<div class="t" style="left:702.5px;top:689px">mm</div>
<div class="t" style="left:702.5px;top:704px">mm</div>
<div class="edit" style="left:723.5px;top:686px;width:38.5px;height:13.5px;border-color:#6a6a6a"></div>
<div class="edit" style="left:723.5px;top:701px;width:38.5px;height:13.5px;border-color:#6a6a6a"></div>
<div class="t" style="left:727px;top:688.5px;font-size:9.5px">100.00</div>
<div class="t" style="left:727px;top:703.5px;font-size:9.5px">100.00</div>
<div class="t" style="left:765.5px;top:688.5px">%</div>
<div class="t" style="left:765.5px;top:703.5px">%</div>
<div class="a" style="left:783.5px;top:686px;width:12px;height:13px;border:1px solid #c8c8c8;background:#f2f2f2"></div>
<div class="a" style="left:783.5px;top:701px;width:12px;height:13px;border:1px solid #c8c8c8;background:#f2f2f2"></div>
<div class="t" style="left:785px;top:687px;color:#c0c0c0;font-size:10px">&#10003;</div>
<div class="t" style="left:785.5px;top:702px;color:#c0c0c0;font-size:10px">&#10007;</div>
<!-- dialog -->
<div class="a" style="left:33px;top:381.5px;width:371px;height:290px;background:#f0f0f0;border:1px solid #8a8a8a;border-bottom:2px solid #6a6a6a;border-right:1.5px solid #9a9a9a;border-radius:5px 5px 0 0;box-shadow:1px 1px 0 #c8c8c8"></div>
<div class="a" style="left:34px;top:382.5px;width:369px;height:18px;background:linear-gradient(90deg,#e6ebf0,#dfe6ee 40%,#d6e2ee 70%,#dbe6f0);border-bottom:1px solid #9aa4ae;border-radius:4px 4px 0 0"></div>
<div class="t" style="left:36.5px;top:386px;font-size:9.3px;color:#3c3c3c">Layout</div>
<div class="a" style="left:35px;top:401px;width:367px;height:267px;background:#f0f0f0;border:1px solid #fbfbfb;border-bottom-color:#dcdcdc"></div>
<!-- group boxes -->
<div class="a" style="left:41px;top:413.5px;width:175.5px;height:242px;border:1px solid #d8d8d8;box-shadow:inset 1px 1px 0 #fff, 1px 1px 0 #fff;border-radius:2px"></div>
<div class="a" style="left:231px;top:458.5px;width:161.5px;height:129.5px;border:1px solid #d8d8d8;box-shadow:inset 1px 1px 0 #fff, 1px 1px 0 #fff;border-radius:2px"></div>
<div class="a" style="left:231px;top:602.5px;width:161.5px;height:52px;border:1px solid #d8d8d8;box-shadow:inset 1px 1px 0 #fff, 1px 1px 0 #fff;border-radius:2px"></div>
<div class="a" style="left:46px;top:408px;width:38px;height:11px;background:#f0f0f0"></div>
<div class="a" style="left:232px;top:453px;width:36px;height:11px;background:#f0f0f0"></div>
<div class="a" style="left:232px;top:597px;width:48px;height:11px;background:#f0f0f0"></div>
<div class="t" style="left:48.5px;top:408.0px;font-size:9.3px;letter-spacing:-0.45px;">Baseline</div>
<div class="edit" style="left:48.5px;top:424.5px;width:103.5px;height:16.5px;border-color:#707070"></div>
<div class="t" style="left:52px;top:427.0px;font-size:9.3px;letter-spacing:-0.45px;">Circle CW</div>
<div class="a" style="left:141.5px;top:431px;border-left:3.5px solid transparent;border-right:3.5px solid transparent;border-top:3.5px solid #111"></div>
<div class="t" style="left:49px;top:470.0px;font-size:9.3px;letter-spacing:-0.45px;color:#a8a8a8">Tilt:</div>
<div class="edit" style="left:127px;top:469.5px;width:45.5px;height:15.0px;border-color:#c0c0c0;background:#f4f4f4;"></div>
<div class="a" style="left:159.5px;top:471.0px;width:12px;height:12.0px;background:linear-gradient(#f2f2f2,#dcdcdc);border:1px solid #c4c4c4"></div>
<div class="a" style="left:163.0px;top:473.0px;border-left:2.5px solid transparent;border-right:2.5px solid transparent;border-bottom:2.5px solid #777"></div>
<div class="a" style="left:163.0px;top:478.5px;border-left:2.5px solid transparent;border-right:2.5px solid transparent;border-top:2.5px solid #777"></div>
<div class="t" style="left:143.2px;top:471.5px;transform:translateX(-50%);font-size:9.3px;letter-spacing:-0.45px;color:#a0a0a0">0</div>
<div class="t" style="left:175.5px;top:466.5px;font-size:9.3px;letter-spacing:-0.45px;">&deg;</div>
<div class="t" style="left:48.5px;top:491.5px;font-size:9.3px;letter-spacing:-0.45px;">Radius X:</div>
<div class="edit" style="left:127px;top:490.5px;width:45.5px;height:15.5px;border-color:#7a7a7a;"></div>
<div class="a" style="left:159.5px;top:492.0px;width:12px;height:12.5px;background:linear-gradient(#f2f2f2,#dcdcdc);border:1px solid #c4c4c4"></div>
<div class="a" style="left:163.0px;top:494.0px;border-left:2.5px solid transparent;border-right:2.5px solid transparent;border-bottom:2.5px solid #777"></div>
<div class="a" style="left:163.0px;top:500.0px;border-left:2.5px solid transparent;border-right:2.5px solid transparent;border-top:2.5px solid #777"></div>
<div class="t" style="left:143.2px;top:492.8px;transform:translateX(-50%);font-size:9.3px;letter-spacing:-0.45px;color:#111">100.33</div>
<div class="t" style="left:176px;top:492.5px;font-size:9.3px;letter-spacing:-0.45px;">mm</div>
<div class="t" style="left:48.5px;top:513.0px;font-size:9.3px;letter-spacing:-0.45px;">Radius Y:</div>
<div class="edit" style="left:127px;top:512px;width:45.5px;height:15.5px;border-color:#7a7a7a;"></div>
<div class="a" style="left:159.5px;top:513.5px;width:12px;height:12.5px;background:linear-gradient(#f2f2f2,#dcdcdc);border:1px solid #c4c4c4"></div>
<div class="a" style="left:163.0px;top:515.5px;border-left:2.5px solid transparent;border-right:2.5px solid transparent;border-bottom:2.5px solid #777"></div>
<div class="a" style="left:163.0px;top:521.5px;border-left:2.5px solid transparent;border-right:2.5px solid transparent;border-top:2.5px solid #777"></div>
<div class="t" style="left:143.2px;top:514.2px;transform:translateX(-50%);font-size:9.3px;letter-spacing:-0.45px;color:#111">100.33</div>
<div class="t" style="left:176px;top:514.0px;font-size:9.3px;letter-spacing:-0.45px;">mm</div>
<div class="t" style="left:48px;top:534.0px;font-size:9.3px;letter-spacing:-0.45px;">Justif. Angle:</div>
<div class="edit" style="left:127px;top:533px;width:45.5px;height:15.5px;border-color:#7a7a7a;"></div>
<div class="a" style="left:159.5px;top:534.5px;width:12px;height:12.5px;background:linear-gradient(#f2f2f2,#dcdcdc);border:1px solid #c4c4c4"></div>
<div class="a" style="left:163.0px;top:536.5px;border-left:2.5px solid transparent;border-right:2.5px solid transparent;border-bottom:2.5px solid #777"></div>
<div class="a" style="left:163.0px;top:542.5px;border-left:2.5px solid transparent;border-right:2.5px solid transparent;border-top:2.5px solid #777"></div>
<div class="t" style="left:143.2px;top:535.2px;transform:translateX(-50%);font-size:9.3px;letter-spacing:-0.45px;color:#111">90</div>
<div class="t" style="left:175.5px;top:530.5px;font-size:9.3px;letter-spacing:-0.45px;">&deg;</div>
<div class="t" style="left:47.5px;top:620.5px;font-size:9.3px;letter-spacing:-0.45px;">Position</div>
<div class="btn" style="left:106.5px;top:613.5px;width:28px;height:27.5px;border-color:#2c628b;border-width:1.5px;background:linear-gradient(#e8f5fc,#bfe4f7 45%,#a5d7f2 55%,#9fd2ef)"></div>
<div class="btn" style="left:137.5px;top:613.5px;width:27.5px;height:27.5px;border-color:#9a9a9a;background:linear-gradient(#f6f6f6,#e6e6e6 50%,#d8d8d8 51%,#d2d2d2)"></div>
<div class="btn" style="left:169px;top:613.5px;width:28px;height:27.5px;border-color:#9a9a9a;background:linear-gradient(#f6f6f6,#e6e6e6 50%,#d8d8d8 51%,#d2d2d2)"></div>
<div class="t" style="left:120.5px;top:618.5px;font-size:16px;line-height:16px;transform:translateX(-50%) scaleX(0.72);color:#1c3c5c;letter-spacing:-0.5px">ABC</div>
<div class="t" style="left:151.3px;top:618.5px;font-size:16px;line-height:16px;transform:translateX(-50%) scaleX(0.72);color:#333;letter-spacing:-0.5px">ABC</div>
<div class="t" style="left:183px;top:618.5px;font-size:16px;line-height:16px;transform:translateX(-50%) scaleX(0.72);color:#333;letter-spacing:-0.5px">ABC</div>
<div class="a" style="left:109px;top:634.5px;width:23px;height:1.5px;background:#1c3c6c"></div>
<div class="a" style="left:140px;top:627px;width:23px;height:1px;background:#333"></div>
<div class="a" style="left:172px;top:618.5px;width:23px;height:1px;background:#333"></div>
<!-- OK / Cancel -->
<div class="btn" style="left:338.5px;top:409px;width:55.5px;height:15.5px;border-color:#707070"></div>
<div class="btn" style="left:338.5px;top:429.5px;width:55.5px;height:15.5px;border-color:#707070"></div>
<div class="t" style="left:366px;top:411.5px;transform:translateX(-50%);font-size:9.3px;letter-spacing:-0.45px">OK</div>
<div class="t" style="left:366px;top:432px;transform:translateX(-50%);font-size:9.3px;letter-spacing:-0.45px">Cancel</div>
<div class="t" style="left:233.5px;top:453.0px;font-size:9.3px;letter-spacing:-0.45px;">Spacing</div>
<div class="t" style="left:238.5px;top:468.5px;font-size:9.3px;letter-spacing:-0.45px;">Letter Spacing:</div>
<div class="edit" style="left:300px;top:469px;width:38.5px;height:14.5px;border-color:#7a7a7a;"></div>
<div class="a" style="left:325.5px;top:470.5px;width:12px;height:11.5px;background:linear-gradient(#f2f2f2,#dcdcdc);border:1px solid #c4c4c4"></div>
<div class="a" style="left:329.0px;top:472.5px;border-left:2.5px solid transparent;border-right:2.5px solid transparent;border-bottom:2.5px solid #777"></div>
<div class="a" style="left:329.0px;top:477.5px;border-left:2.5px solid transparent;border-right:2.5px solid transparent;border-top:2.5px solid #777"></div>
<div class="t" style="left:323.5px;top:470.8px;transform:translateX(-100%);font-size:9.3px;letter-spacing:-0.45px;color:#111">0</div>
<div class="t" style="left:342.5px;top:469.0px;font-size:9.3px;letter-spacing:-0.45px;">% of Height</div>
<div class="edit" style="left:300px;top:486px;width:38.5px;height:15.0px;border-color:#7a7a7a;"></div>
<div class="a" style="left:325.5px;top:487.5px;width:12px;height:12.0px;background:linear-gradient(#f2f2f2,#dcdcdc);border:1px solid #c4c4c4"></div>
<div class="a" style="left:329.0px;top:489.5px;border-left:2.5px solid transparent;border-right:2.5px solid transparent;border-bottom:2.5px solid #777"></div>
<div class="a" style="left:329.0px;top:495.0px;border-left:2.5px solid transparent;border-right:2.5px solid transparent;border-top:2.5px solid #777"></div>
<div class="t" style="left:323.5px;top:488.0px;transform:translateX(-100%);font-size:9.3px;letter-spacing:-0.45px;color:#111">0.00</div>
<div class="t" style="left:342.5px;top:488.0px;font-size:9.3px;letter-spacing:-0.45px;">mm</div>
<div class="t" style="left:238.5px;top:509.5px;font-size:9.3px;letter-spacing:-0.45px;">Word Spacing:</div>
<div class="edit" style="left:300px;top:509.5px;width:38.5px;height:14.5px;border-color:#7a7a7a;"></div>
<div class="a" style="left:325.5px;top:511.0px;width:12px;height:11.5px;background:linear-gradient(#f2f2f2,#dcdcdc);border:1px solid #c4c4c4"></div>
<div class="a" style="left:329.0px;top:513.0px;border-left:2.5px solid transparent;border-right:2.5px solid transparent;border-bottom:2.5px solid #777"></div>
<div class="a" style="left:329.0px;top:518.0px;border-left:2.5px solid transparent;border-right:2.5px solid transparent;border-top:2.5px solid #777"></div>
<div class="t" style="left:323.5px;top:511.2px;transform:translateX(-100%);font-size:9.3px;letter-spacing:-0.45px;color:#111">60</div>
<div class="t" style="left:342.5px;top:511.5px;font-size:9.3px;letter-spacing:-0.45px;">% of Height</div>
<div class="edit" style="left:300px;top:526.5px;width:38.5px;height:15.0px;border-color:#7a7a7a;"></div>
<div class="a" style="left:325.5px;top:528.0px;width:12px;height:12.0px;background:linear-gradient(#f2f2f2,#dcdcdc);border:1px solid #c4c4c4"></div>
<div class="a" style="left:329.0px;top:530.0px;border-left:2.5px solid transparent;border-right:2.5px solid transparent;border-bottom:2.5px solid #777"></div>
<div class="a" style="left:329.0px;top:535.5px;border-left:2.5px solid transparent;border-right:2.5px solid transparent;border-top:2.5px solid #777"></div>
<div class="t" style="left:323.5px;top:528.5px;transform:translateX(-100%);font-size:9.3px;letter-spacing:-0.45px;color:#111">121.3</div>
<div class="t" style="left:342.5px;top:529.0px;font-size:9.3px;letter-spacing:-0.45px;">mm</div>
<div class="t" style="left:238.5px;top:549.0px;font-size:9.3px;letter-spacing:-0.45px;">Line Spacing:</div>
<div class="edit" style="left:300px;top:550px;width:38.5px;height:14.5px;border-color:#7a7a7a;"></div>
<div class="a" style="left:325.5px;top:551.5px;width:12px;height:11.5px;background:linear-gradient(#f2f2f2,#dcdcdc);border:1px solid #c4c4c4"></div>
<div class="a" style="left:329.0px;top:553.5px;border-left:2.5px solid transparent;border-right:2.5px solid transparent;border-bottom:2.5px solid #777"></div>
<div class="a" style="left:329.0px;top:558.5px;border-left:2.5px solid transparent;border-right:2.5px solid transparent;border-top:2.5px solid #777"></div>
<div class="t" style="left:323.5px;top:551.8px;transform:translateX(-100%);font-size:9.3px;letter-spacing:-0.45px;color:#111">50</div>
<div class="t" style="left:342.5px;top:551.0px;font-size:9.3px;letter-spacing:-0.45px;">% of Height</div>
<div class="edit" style="left:300px;top:569px;width:38.5px;height:15.0px;border-color:#7a7a7a;"></div>
<div class="a" style="left:325.5px;top:570.5px;width:12px;height:12.0px;background:linear-gradient(#f2f2f2,#dcdcdc);border:1px solid #c4c4c4"></div>
<div class="a" style="left:329.0px;top:572.5px;border-left:2.5px solid transparent;border-right:2.5px solid transparent;border-bottom:2.5px solid #777"></div>
<div class="a" style="left:329.0px;top:578.0px;border-left:2.5px solid transparent;border-right:2.5px solid transparent;border-top:2.5px solid #777"></div>
<div class="t" style="left:323.5px;top:571.0px;transform:translateX(-100%);font-size:9.3px;letter-spacing:-0.45px;color:#111">101.1</div>
<div class="t" style="left:342.5px;top:571.0px;font-size:9.3px;letter-spacing:-0.45px;">mm</div>
<div class="t" style="left:233px;top:596.5px;font-size:9.3px;letter-spacing:-0.45px;">Orientation</div>
<div class="a" style="left:238.5px;top:614.5px;width:9px;height:9px;border-radius:50%;border:1px solid #8a8a8a;background:radial-gradient(#fff,#dcdcdc)"></div>
<div class="a" style="left:238.5px;top:638.5px;width:9px;height:9px;border-radius:50%;border:1px solid #6a7a8a;background:radial-gradient(#2a4a6a 0 2px,#c8d8e8 2.5px,#eef2f6)"></div>
<div class="t" style="left:251px;top:614.0px;font-size:9.3px;letter-spacing:-0.45px;">Baseline</div>
<div class="t" style="left:251px;top:638.0px;font-size:9.3px;letter-spacing:-0.45px;">Design</div>
<svg class="a" style="left:292px;top:620px" width="27" height="22" viewBox="0 0 27 22" fill="none">
<path d="M11.5 3.5C8 3.5 5 6 4 10C3.5 13 5 15.5 7 16.5" stroke="#222" stroke-width="1.2"/>
<path d="M1.8 9L4 13L6.5 9.5Z" stroke="#222" stroke-width="0.8" fill="#222"/>
<path d="M11.5 16.5L14.5 4L17.5 16.5M12.5 12.5H16.5" stroke="#222" stroke-width="1.1"/>
<path d="M2.5 16.5H25" stroke="#333" stroke-width="1"/>
<path d="M4 18.5C7 20.5 11 20.5 13.5 17.5" stroke="#b04040" stroke-width="0.8"/>
</svg>
<div class="edit" style="left:332px;top:621px;width:44.0px;height:15.5px;border-color:#7a7a7a;"></div>
<div class="a" style="left:363.0px;top:622.5px;width:12px;height:12.5px;background:linear-gradient(#f2f2f2,#dcdcdc);border:1px solid #c4c4c4"></div>
<div class="a" style="left:366.5px;top:624.5px;border-left:2.5px solid transparent;border-right:2.5px solid transparent;border-bottom:2.5px solid #777"></div>
<div class="a" style="left:366.5px;top:630.5px;border-left:2.5px solid transparent;border-right:2.5px solid transparent;border-top:2.5px solid #777"></div>
<div class="t" style="left:347.5px;top:623.2px;transform:translateX(-50%);font-size:9.3px;letter-spacing:-0.45px;color:#111">90</div>
<div class="t" style="left:380px;top:618.5px;font-size:9.3px;letter-spacing:-0.45px;">&deg;</div>
</body></html>
